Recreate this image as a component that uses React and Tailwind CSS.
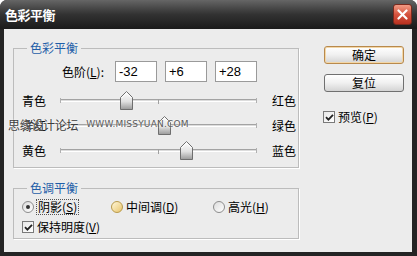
import React from 'react';

const Mn = ({ children }) => <span className="underline underline-offset-[1px]">{children}</span>;

const Thumb = () => (
  <svg width="13" height="19" viewBox="0 0 13 19">
    <defs>
      <linearGradient id="thumbFill" x1="0" y1="0" x2="0" y2="1">
        <stop offset="0" stopColor="#ffffff" />
        <stop offset="0.55" stopColor="#e2e2e2" />
        <stop offset="1" stopColor="#9a9a9a" />
      </linearGradient>
    </defs>
    <polygon points="6.5,0.5 12.5,6.5 12.5,18.5 0.5,18.5 0.5,6.5" fill="url(#thumbFill)" stroke="#6e6e6e" />
    <polyline points="1.5,7 6.5,1.8 11.5,7" fill="none" stroke="#ffffff" />
  </svg>
);

const Slider = ({ value }) => {
  const center = 98.5 + value * 0.985;
  return (
    <div className="relative w-[197px] h-[25px] flex items-center">
      <div className="w-full h-[3px] border-t border-[#a3a3a3] border-b border-b-white bg-[#dcdcdc]" />
      <div className="absolute left-0 top-[10px] w-px h-[5px] bg-[#b0b0b0]" />
      <div className="absolute left-[98px] top-[11px] w-px h-[5px] bg-[#a0a0a0]" />
      <div className="absolute right-0 top-[10px] w-px h-[5px] bg-[#b0b0b0]" />
      <div className="absolute top-[3px]" style={{ left: center - 6.5 }}>
        <Thumb />
      </div>
    </div>
  );
};

const SliderRow = ({ left, right, value }) => (
  <div className="flex items-center h-[25px] pl-[8px]">
    <span className="w-[38px]">{left}</span>
    <Slider value={value} />
    <span className="ml-[15px]">{right}</span>
  </div>
);

const Check = () => (
  <span className="w-[12px] h-[12px] border border-[#7a7a7a] bg-gradient-to-br from-[#e8e8e8] to-white flex items-center justify-center shrink-0">
    <svg width="9" height="9" viewBox="0 0 9 9">
      <polyline points="1,4.2 3.4,6.6 8,1.8" fill="none" stroke="#222" strokeWidth="1.8" />
    </svg>
  </span>
);

const Radio = ({ checked, hover }) => (
  <span
    className={`w-[12px] h-[12px] rounded-full border flex items-center justify-center shrink-0 ${
      hover
        ? 'border-[#b99a4a] bg-gradient-to-br from-[#fff6d8] to-[#e8c56a]'
        : 'border-[#8c8c8c] bg-gradient-to-br from-[#dcdcdc] to-white'
    }`}
  >
    {checked && <span className="w-[4px] h-[4px] rounded-full bg-[#333]" />}
  </span>
);

const Button = ({ children, primary }) => (
  <button
    type="button"
    className={`w-[80px] h-[18px] rounded-[3px] border bg-gradient-to-b from-white via-[#f0f0f0] to-[#d4d4d4] flex items-center justify-center leading-none ${
      primary ? 'border-[#b8894c] shadow-[inset_0_0_0_1px_#f3d7a8]' : 'border-[#707070]'
    }`}
  >
    {children}
  </button>
);

export default function App() {
  return (
    <div className="relative w-[417px] h-[256px] bg-[#242424] rounded-t-[7px] flex flex-col overflow-hidden text-[12px] text-black font-['Noto_Sans_CJK_SC',sans-serif]">
      {/* title bar */}
      <div className="h-[29px] shrink-0 flex items-center justify-between pl-[5px] pr-[5px] bg-gradient-to-b from-[#666666] via-[#323232] to-[#1b1b1b]">
        <span className="text-white font-bold text-[13px] tracking-[-0.5px] leading-none">色彩平衡</span>
        <button
          type="button"
          className="w-[19px] h-[21px] rounded-[3px] border border-[#7a2a1e] bg-gradient-to-b from-[#f09a84] via-[#d5533f] to-[#b8301f] flex items-center justify-center"
        >
          <svg width="11" height="11" viewBox="0 0 11 11">
            <path d="M1.5 1.5 L9.5 9.5 M9.5 1.5 L1.5 9.5" stroke="#fff" strokeWidth="2.2" strokeLinecap="round" />
          </svg>
        </button>
      </div>

      {/* body */}
      <div className="flex-1 ml-[4px] mr-[5px] mb-[4px] bg-[#ececec] flex pl-[9px]">
        <div className="w-[286px] flex flex-col pt-[11px]">
          <fieldset className="border border-[#bcbcbc] shadow-[1px_1px_0_#fff] pb-[4px]">
            <legend className="ml-[13px] px-[3px] leading-[16px] text-[#1f5ea8]">色彩平衡</legend>
            <div className="flex items-center pl-[48px] mt-[5px]">
              <span className="w-[53px]">
                色阶(<Mn>L</Mn>):
              </span>
              <div className="flex gap-[8px] font-['Liberation_Sans',sans-serif] text-[13px]">
                <div className="w-[42px] h-[21px] border border-[#9a9a9a] bg-white pl-[3px] leading-[19px]">-32</div>
                <div className="w-[42px] h-[21px] border border-[#9a9a9a] bg-white pl-[3px] leading-[19px]">+6</div>
                <div className="w-[42px] h-[21px] border border-[#9a9a9a] bg-white pl-[3px] leading-[19px]">+28</div>
              </div>
            </div>
            <div className="mt-[6px]">
              <SliderRow left="青色" right="红色" value={-32} />
              <SliderRow left="洋红" right="绿色" value={6} />
              <SliderRow left="黄色" right="蓝色" value={28} />
            </div>
          </fieldset>

          <fieldset className="mt-[12px] border border-[#bcbcbc] shadow-[1px_1px_0_#fff] pb-[3px]">
            <legend className="ml-[13px] px-[3px] leading-[16px] text-[#1f5ea8]">色调平衡</legend>
            <div className="flex items-center h-[16px] mt-[3px] pl-[8px]">
              <div className="w-[89px] flex items-center gap-[2px]">
                <Radio checked />
                <span className="border border-dotted border-[#555] px-[1px] leading-[14px]">
                  阴影(<Mn>S</Mn>)
                </span>
              </div>
              <div className="w-[102px] flex items-center gap-[3px]">
                <Radio hover />
                <span>
                  中间调(<Mn>D</Mn>)
                </span>
              </div>
              <div className="flex items-center gap-[3px]">
                <Radio />
                <span>
                  高光(<Mn>H</Mn>)
                </span>
              </div>
            </div>
            <div className="flex items-center gap-[3px] h-[16px] mt-[4px] pl-[8px]">
              <Check />
              <span>
                保持明度(<Mn>V</Mn>)
              </span>
            </div>
          </fieldset>
        </div>

        <div className="ml-[25px] pt-[17px] flex flex-col">
          <Button primary>确定</Button>
          <div className="mt-[10px]">
            <Button>复位</Button>
          </div>
          <div className="mt-[16px] flex items-center gap-[3px] -ml-px">
            <Check />
            <span>
              预览(<Mn>P</Mn>)
            </span>
          </div>
        </div>
      </div>

      {/* watermark */}
      <div className="absolute left-[8px] top-[116px] flex items-center gap-[8px] pointer-events-none [text-shadow:0_0_2px_#fff]">
        <span className="text-[12px] text-[#3c3c3c] tracking-[-0.3px]">思缘设计论坛</span>
        <span className="text-[9px] text-[#5a5a5a] font-['DejaVu_Sans',sans-serif] tracking-[0.2px]">WWW.MISSYUAN.COM</span>
      </div>
    </div>
  );
}
